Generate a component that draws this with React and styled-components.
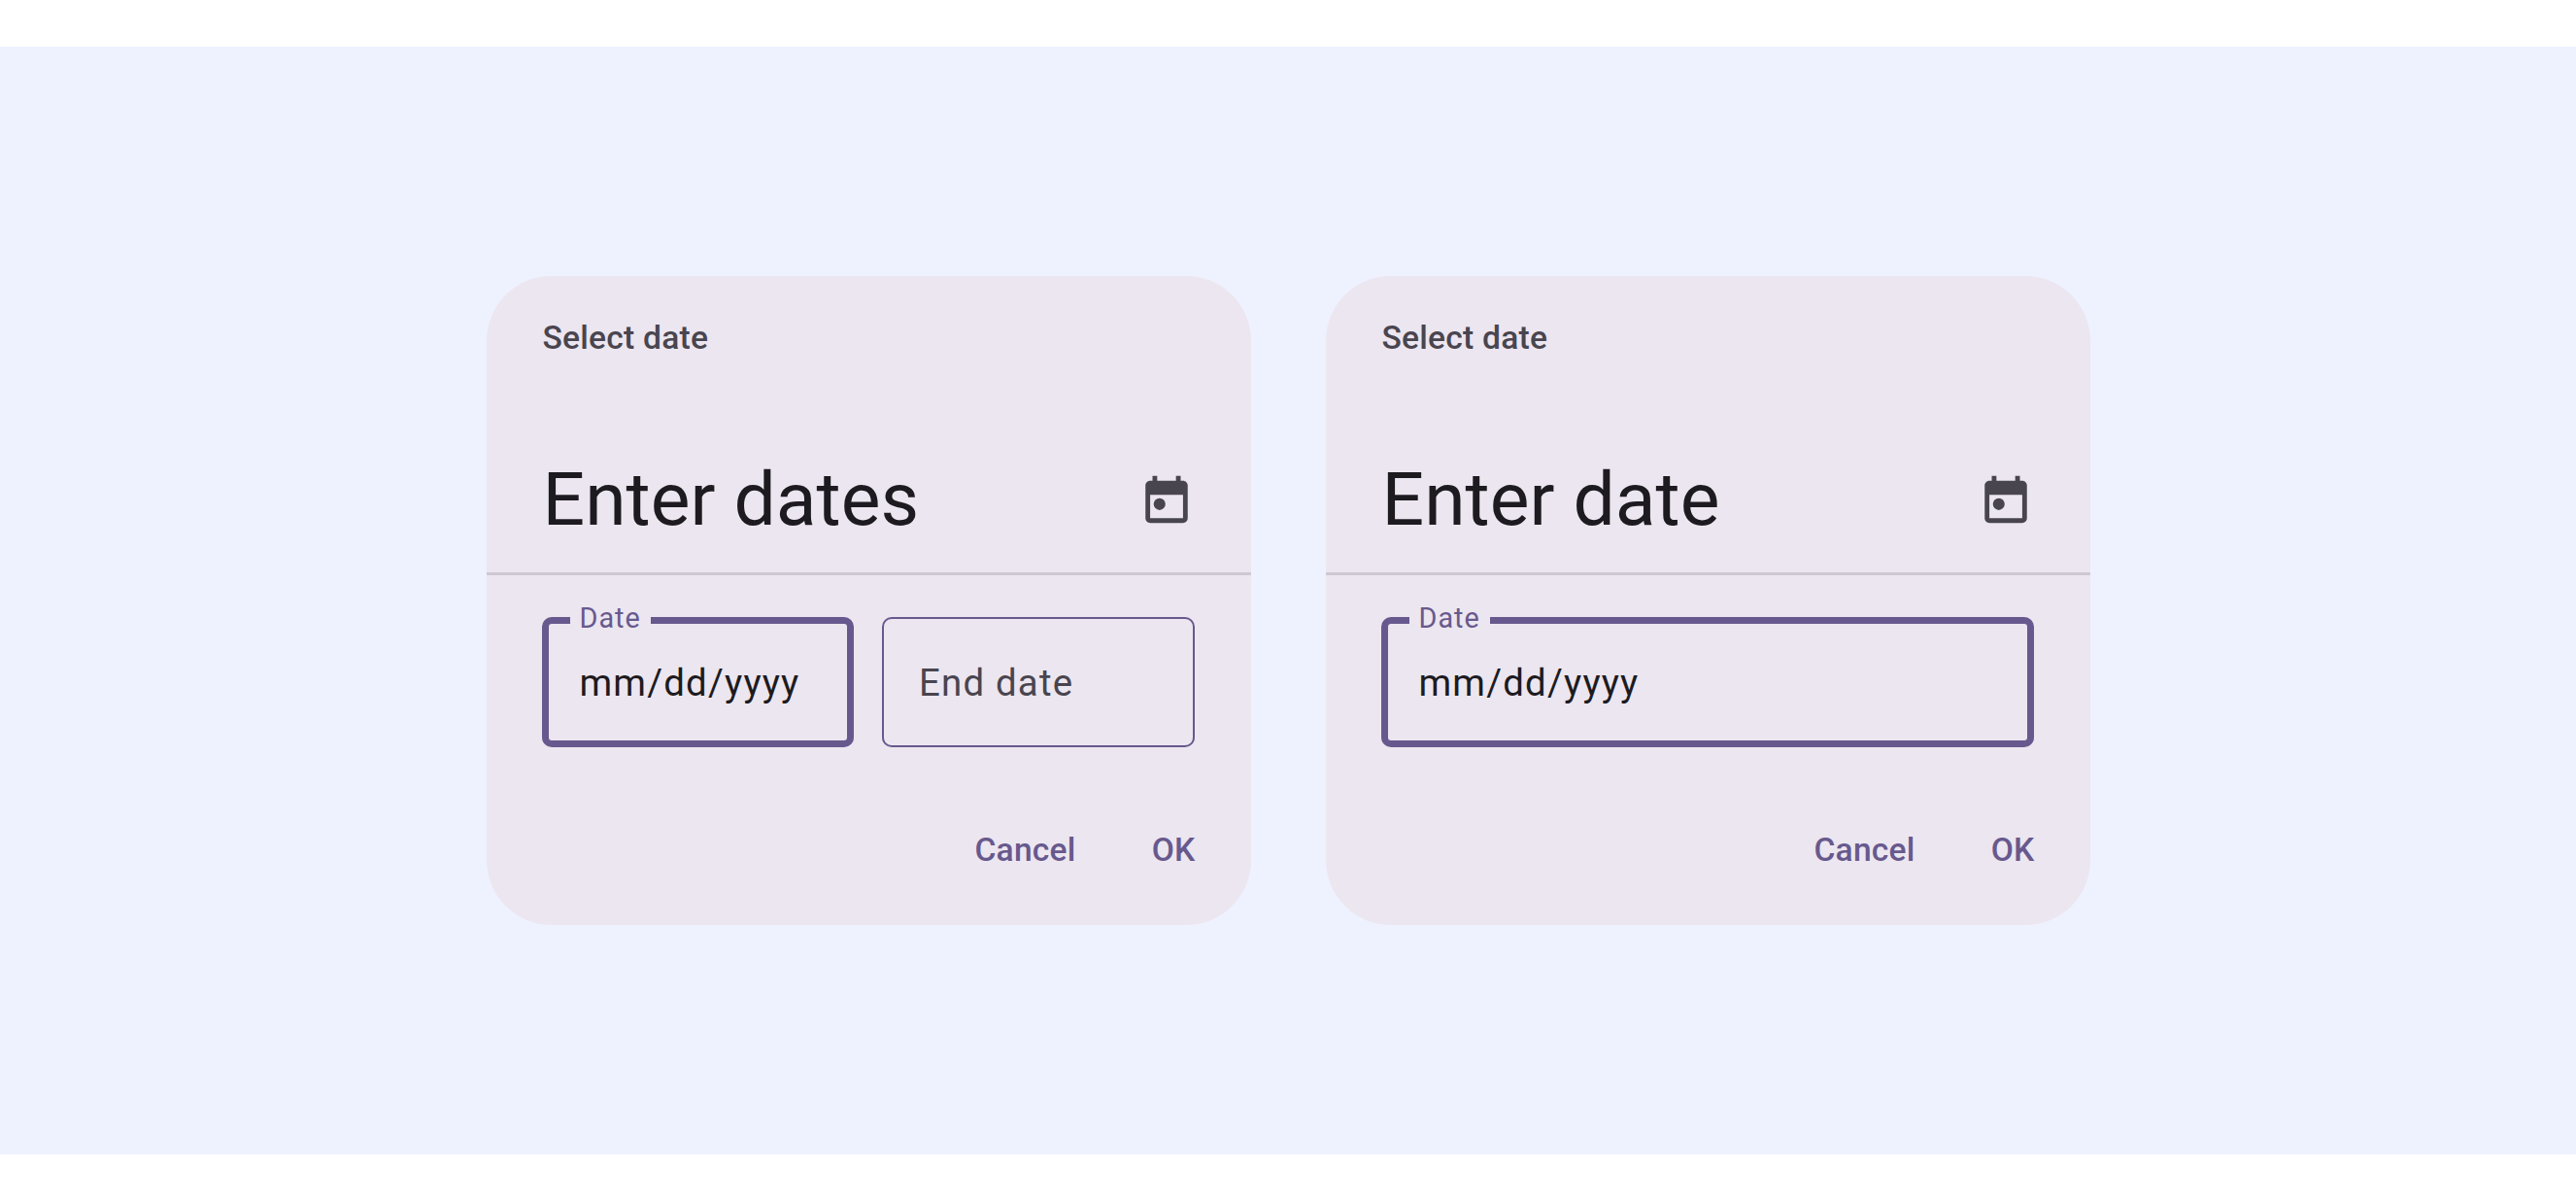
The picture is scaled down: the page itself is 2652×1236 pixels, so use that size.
import React from "react";
import styled, { createGlobalStyle } from "styled-components";

const GlobalStyle = createGlobalStyle`
  html, body {
    margin: 0;
    padding: 0;
    background: #fff;
  }
  body {
    font-family: Roboto, "Liberation Sans", sans-serif;
    -webkit-font-smoothing: antialiased;
  }
`;

const Page = styled.div`
  padding: 48px 0;
  width: 2652px;
  box-sizing: border-box;
`;

const Band = styled.div`
  height: 1140px;
  background: #eef1fe;
  display: flex;
  justify-content: center;
  align-items: center;
  gap: 77px;
`;

const Card = styled.div`
  width: 787px;
  height: 668px;
  background: #ece6f0;
  border-radius: 67px;
  display: flex;
  flex-direction: column;
`;

const Header = styled.div`
  height: 308px;
  box-sizing: border-box;
  padding: 42px 58px 0;
  border-bottom: 3px solid #cec8d4;
  display: flex;
  flex-direction: column;
`;

const Supporting = styled.div`
  font-size: 33.6px;
  font-weight: 500;
  line-height: 44px;
  letter-spacing: 0.24px;
  color: #49454f;
`;

const HeadlineRow = styled.div`
  margin-top: 100px;
  display: flex;
  align-items: center;
  justify-content: space-between;
  height: 88px;
`;

const Headline = styled.div`
  font-size: 76.8px;
  font-weight: 400;
  line-height: 88px;
  color: #1d1b20;
`;

const IconSlot = styled.svg`
  width: 58px;
  height: 58px;
  fill: #49454f;
  display: block;
`;

const Fields = styled.div`
  display: grid;
  grid-auto-flow: column;
  grid-auto-columns: 1fr;
  gap: 29px;
  padding: 43px 58px 0 57px;
`;

const Field = styled.div`
  position: relative;
  height: 134px;
  box-sizing: border-box;
  border-radius: 10px;
  border: ${(p) => (p.$focused ? "7px" : "2px")} solid #67598d;
  padding-left: ${(p) => (p.$focused ? "32px" : "36px")};
  display: flex;
  align-items: center;
  font-size: 38.4px;
  letter-spacing: 1.2px;
  color: ${(p) => (p.$focused ? "#1d1b20" : "#49454f")};
`;

const FloatLabel = styled.span`
  position: absolute;
  left: 22px;
  top: -22px;
  padding: 0 10px;
  background: #ece6f0;
  font-size: 28.8px;
  line-height: 32px;
  letter-spacing: 1px;
  color: #67598d;
`;

const Actions = styled.div`
  margin-top: auto;
  padding: 0 57px 55px 0;
  display: flex;
  justify-content: flex-end;
  gap: 78px;
`;

const ActionButton = styled.div`
  font-size: 33.6px;
  font-weight: 500;
  line-height: 44px;
  letter-spacing: 0.24px;
  color: #67598d;
`;

const EventIcon = () => (
  <IconSlot viewBox="0 0 24 24">
    <path fillRule="evenodd" d="M19 4h-1V2h-2v2H8V2H6v2H5c-1.1 0-2 .9-2 2v14c0 1.1.9 2 2 2h14c1.1 0 2-.9 2-2V6c0-1.1-.9-2-2-2zm0 16H5V10h14v10z" />
    <circle cx="9" cy="14" r="2.5" />
  </IconSlot>
);

const DateField = ({ focused, label, children }) => (
  <Field $focused={focused}>
    {label && <FloatLabel>{label}</FloatLabel>}
    {children}
  </Field>
);

const DateDialog = ({ title, range }) => (
  <Card>
    <Header>
      <Supporting>Select date</Supporting>
      <HeadlineRow>
        <Headline>{title}</Headline>
        <EventIcon />
      </HeadlineRow>
    </Header>
    <Fields>
      <DateField focused label="Date">mm/dd/yyyy</DateField>
      {range && <DateField>End date</DateField>}
    </Fields>
    <Actions>
      <ActionButton>Cancel</ActionButton>
      <ActionButton>OK</ActionButton>
    </Actions>
  </Card>
);

const App = () => (
  <Page>
    <GlobalStyle />
    <Band>
      <DateDialog title="Enter dates" range />
      <DateDialog title="Enter date" />
    </Band>
  </Page>
);

export default App;
